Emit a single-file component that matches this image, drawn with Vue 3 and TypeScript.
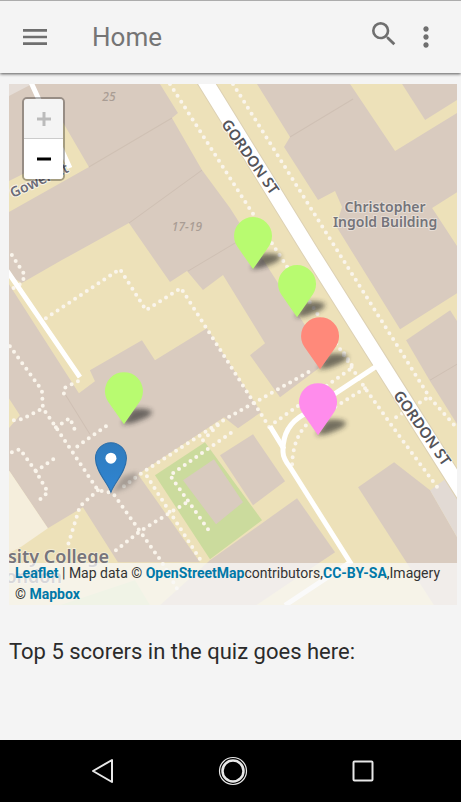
<script setup lang="ts">
interface Pin {
  x: number
  y: number
  color: string
}

const buildings: string[] = [
  '9,84 160,84 178,113 172,118 89,167 64,124 50,100 55,158 9,181',
  '9,212 89,167 172,118 202,170 230,208 328,361 280,397 250,355 265,343 223,275 203,290 187,271 170,282 129,223 62,260 22,283 9,275',
  '9,284 79,393 95,381 90,370 142,340 155,360 207,328 261,412 238,428 224,417 138,474 200,562 118,562 83,507 48,528 9,470 9,428 20,415 9,398',
  '257,84 350,84 395,151 457,113 457,192 432,208 457,246 457,293 400,329 336,226 342,207 335,191 318,200 284,147 290,137',
  '402,84 457,84 457,100 425,120',
  '406,340 450,310 457,321 457,424 430,381',
  '358,487 394,462 430,490 457,537 457,605 434,605',
  '253,434 285,481 253,505 220,455',
  '297,498 335,552 256,605 160,605 210,560',
]

const footpaths: string[] = [
  'M170 84 L230 178 L365 388 L395 430 L438 488',
  'M233 84 L290 175 L342 258 L400 350 L430 398 L457 428',
  'M46 318 L120 269 L146 310 L181 288 L230 365 L270 428',
  'M12 255 L25 275 L22 283 L10 290',
  'M10 346 L42 390 L43 408 L56 427 L98 490 L113 493 L140 531 L162 562 L178 590',
  'M14 420 L22 419 L43 408',
  'M56 427 L70 418 L76 432',
  'M78 381 L64 388 L64 395',
  'M106 426 L72 450',
  'M12 452 L20 449 L36 471 L48 492 L36 503',
  'M36 471 L55 458',
  'M98 490 L80 506 L68 545',
  'M116 550 L140 531 L187 502 L187 497',
  'M124 486 L140 474 L225 419 L310 371',
  'M147 476 L202 562',
  'M208 529 L170 475 L232 432',
  'M203 440 L222 421',
  'M275 422 L353 367 L342 350',
  'M365 388 L306 425 Q292 440 292 468',
  'M396 417 L430 396',
]

const pins: Pin[] = [
  { x: 253, y: 269, color: '#b8fb70' },
  { x: 297, y: 317, color: '#b8fb70' },
  { x: 320, y: 369, color: '#ff897a' },
  { x: 318, y: 435, color: '#ff8cec' },
  { x: 124, y: 424, color: '#b8fb70' },
]
</script>

<template>
  <div class="screen">
    <header class="bar">
      <button class="icon-button" type="button" aria-label="Open menu">
        <svg viewBox="0 0 24 24"><path d="M3 18h18v-2H3v2zm0-5h18v-2H3v2zm0-7v2h18V6H3z" /></svg>
      </button>
      <h1 class="title">Home</h1>
      <button class="icon-button search" type="button" aria-label="Search">
        <svg viewBox="0 0 24 24">
          <path d="M15.5 14h-.79l-.28-.27A6.47 6.47 0 0 0 16 9.5 6.5 6.5 0 1 0 9.5 16c1.61 0 3.09-.59 4.23-1.57l.27.28v.79l5 4.99L20.49 19l-4.99-5zm-6 0C7.01 14 5 11.99 5 9.5S7.01 5 9.5 5 14 7.01 14 9.5 11.99 14 9.5 14z" />
        </svg>
      </button>
      <button class="icon-button more" type="button" aria-label="More options">
        <svg viewBox="0 0 24 24">
          <path d="M12 8c1.1 0 2-.9 2-2s-.9-2-2-2-2 .9-2 2 .9 2 2 2zm0 2c-1.1 0-2 .9-2 2s.9 2 2 2 2-.9 2-2-.9-2-2-2zm0 6c-1.1 0-2 .9-2 2s.9 2 2 2 2-.9 2-2-.9-2-2-2z" />
        </svg>
      </button>
    </header>

    <main class="content">
      <section class="map" aria-label="Map">
        <svg class="tiles" viewBox="9 84 448 521" preserveAspectRatio="xMidYMid slice">
          <defs>
            <filter id="soft" x="-50%" y="-100%" width="200%" height="300%">
              <feGaussianBlur stdDeviation="2.5" />
            </filter>
            <linearGradient id="blue" x1="0" y1="0" x2="0" y2="1">
              <stop offset="0" stop-color="#2f7bbd" />
              <stop offset="1" stop-color="#2f85d2" />
            </linearGradient>
          </defs>

          <rect x="9" y="84" width="448" height="521" fill="#ede1b9" />
          <polygon points="155,475 205,442 262,520 210,559" fill="#cbdb9d" />
          <polygon v-for="shape in buildings" :key="shape" :points="shape" class="building" />
          <polygon points="9,84 32,84 9,96" fill="#e5ddd7" />
          <polygon points="9,470 48,528 22,546 9,553" fill="#f5eedc" />
          <polygon points="60,605 135,580 150,605" fill="#d5e2ae" />
          <polygon points="430,490 445,479 457,496 457,537" fill="#e2dad4" />
          <polygon points="183,480 214,459 243,502 216,524" class="building" />
          <path class="walls" d="M89 167L172 118M129 223L202 170M188 271L250 234M290 137L353 99M430 380L457 364M64 392L90 434" />

          <g class="footpaths">
            <path v-for="route in footpaths" :key="route" :d="route" />
          </g>

          <path class="casing" d="M202 76L312 254L384 368L470 504" />
          <path class="road" d="M202 76L312 254L384 368L470 504" />
          <path class="lane" d="M378 365L304 414Q282 426 283 452Q283 458 290 467L350 562L285 605" />
          <path class="lane" d="M270 426L284 449M6 269L80 377M31 82L70 168" />

          <g class="street">
            <text transform="translate(250 157) rotate(55)" y="5">GORDON ST</text>
            <text transform="translate(422 428) rotate(55)" y="5">GORDON ST</text>
          </g>
          <text class="court" transform="translate(13 198) rotate(-25)">Gower Ct</text>
          <g class="place">
            <text x="385" y="212">Christopher</text>
            <text x="385" y="227">Ingold Building</text>
          </g>
          <g class="college">
            <text x="109" y="563">University College</text>
            <text x="62" y="583">London</text>
          </g>
          <g class="number">
            <text x="109" y="101">25</text>
            <text x="187" y="231">17-19</text>
          </g>

          <g v-for="pin in pins" :key="pin.y" :transform="`translate(${pin.x} ${pin.y})`">
            <path d="M-2 0L8 -15Q22 -17 28 -13Q28 -8 16 -4Q8 0 -2 0Z" fill="#222" opacity="0.6" filter="url(#soft)" />
            <path d="M0 0L-14 -20C-17 -24 -19 -28 -19 -33A19 19 0 0 1 19 -33C19 -28 17 -24 14 -20Z" :fill="pin.color" />
          </g>
          <g transform="translate(111 493)">
            <path d="M0 0L12 -17L26 -21Q28 -12 14 -5Z" fill="#444" opacity="0.35" filter="url(#soft)" />
            <path d="M0 -1C-3 -10 -15.500 -22 -15.500 -35A15.500 15.500 0 0 1 15.500 -35C15.500 -22 3 -10 0 -1Z" fill="url(#blue)" stroke="#2b6da8" />
            <circle cy="-35" r="5.500" fill="#fff" />
          </g>
        </svg>

        <div class="zoom">
          <button type="button" aria-label="Zoom in" disabled>
            <svg viewBox="0 0 14 14"><path d="M0 7h14M7 0v14" /></svg>
          </button>
          <button type="button" aria-label="Zoom out">
            <svg viewBox="0 0 14 14"><path d="M0 7h14" /></svg>
          </button>
        </div>

        <p class="credit">
          <a href="#leaflet">Leaflet</a> | Map data © <a href="#osm">OpenStreetMap</a>contributors,<a href="#licence">CC-BY-SA</a>,Imagery © <a href="#mapbox">Mapbox</a>
        </p>
      </section>

      <h2 class="scores">Top 5 scorers in the quiz goes here:</h2>
    </main>

    <nav class="system" aria-label="System">
      <button type="button" aria-label="Back">
        <svg viewBox="0 0 32 32"><path d="M25 5v22L6 16z" /></svg>
      </button>
      <button type="button" aria-label="Home">
        <svg viewBox="0 0 32 32"><circle cx="16" cy="16" r="13.500" stroke-width="1.200" /><circle cx="16" cy="16" r="10.500" stroke-width="2.500" /></svg>
      </button>
      <button type="button" aria-label="Recent apps">
        <svg viewBox="0 0 32 32"><rect x="6.500" y="6.500" width="19" height="19" rx="1" /></svg>
      </button>
    </nav>
  </div>
</template>

<style>
body {
  margin: 0;
  background: #f4f4f4;
}
</style>

<style scoped>
.screen {
  display: flex;
  flex-direction: column;
  min-height: 100vh;
  font-family: Roboto, "Liberation Sans", sans-serif;
  background: #f4f4f4;
}

button {
  display: flex;
  align-items: center;
  justify-content: center;
  padding: 0;
  border: 0;
  background: none;
}

.bar {
  display: flex;
  align-items: center;
  box-sizing: border-box;
  height: 73px;
  padding: 0 19px;
  border-top: 1px solid #acacac;
  box-shadow: 0 1px 3px rgba(0, 0, 0, 0.65);
}

.icon-button svg {
  display: block;
  width: 32px;
  height: 32px;
  fill: #6f6f6f;
}

.search {
  padding-bottom: 6px;
}

.more {
  margin-left: 10px;
}

.title {
  flex: 1;
  margin: 0 0 0 41px;
  font-size: 26px;
  font-weight: 400;
  line-height: 32px;
  color: #757575;
}

.content {
  flex: 1;
  padding: 11px 4px 0 9px;
}

.map {
  position: relative;
  height: 65vh;
  overflow: hidden;
}

.tiles {
  display: block;
  width: 100%;
  height: 100%;
  font-family: "Noto Sans", "Open Sans", sans-serif;
}

.building {
  fill: #d9cbbf;
}

.walls {
  fill: none;
  stroke: #cfc0b4;
  stroke-width: 1;
}

.footpaths {
  fill: none;
  stroke: #faf5ec;
  stroke-width: 4;
  stroke-linecap: round;
  stroke-dasharray: 0 7;
}

.casing {
  fill: none;
  stroke: #ddd1b4;
  stroke-width: 17;
}

.road {
  fill: none;
  stroke: #fff;
  stroke-width: 15;
}

.lane {
  fill: none;
  stroke: #fff;
  stroke-width: 5;
}

.street,
.court,
.place,
.college {
  paint-order: stroke;
  stroke: rgba(255, 255, 255, 0.7);
  stroke-width: 2px;
  stroke-linejoin: round;
}

.street {
  fill: #55555a;
  font-size: 15px;
  font-weight: 600;
  text-anchor: middle;
}

.court {
  fill: #6c6c78;
  font-size: 14px;
  font-weight: 600;
}

.place {
  fill: #74747a;
  stroke: rgba(255, 255, 255, 0.4);
  font-size: 14px;
  font-weight: 600;
  text-anchor: middle;
}

.college {
  fill: #77757c;
  stroke: rgba(255, 255, 255, 0.4);
  font-size: 18px;
  font-weight: 600;
  text-anchor: end;
}

.number {
  fill: #a99d94;
  font-size: 12px;
  font-style: italic;
  font-weight: 500;
  text-anchor: middle;
}

.zoom {
  position: absolute;
  top: 13px;
  left: 13px;
  border: 2px solid rgba(0, 0, 0, 0.3);
  border-radius: 5px;
  background-clip: padding-box;
}

.zoom button {
  width: 39px;
  height: 40px;
  background: #fff;
  border-radius: 0 0 3px 3px;
}

.zoom button:disabled {
  background: #f4f4f4;
  border-bottom: 1px solid #ccc;
  border-radius: 3px 3px 0 0;
}

.zoom svg {
  width: 14px;
  height: 14px;
  stroke: #000;
  stroke-width: 3;
}

.zoom button:disabled svg {
  stroke: #bbb;
}

.credit {
  position: absolute;
  right: 0;
  bottom: 0;
  left: 0;
  margin: 0;
  padding: 0 6px;
  font-size: 14px;
  line-height: 21px;
  color: #333;
  background: rgba(248, 248, 248, 0.75);
}

.credit a {
  font-weight: 700;
  color: #0078a8;
  text-decoration: none;
}

.scores {
  margin: 33px 0 32px;
  font-size: 22px;
  font-weight: 400;
  line-height: 28px;
  color: #2b2b2b;
}

.system {
  display: grid;
  grid-template-columns: repeat(3, 1fr);
  align-items: center;
  height: 62px;
  padding: 0 33px 0 38px;
  background: #000;
}

.system svg {
  width: 32px;
  height: 32px;
  fill: none;
  stroke: #e8e8e8;
  stroke-width: 2;
  stroke-linejoin: round;
}
</style>
